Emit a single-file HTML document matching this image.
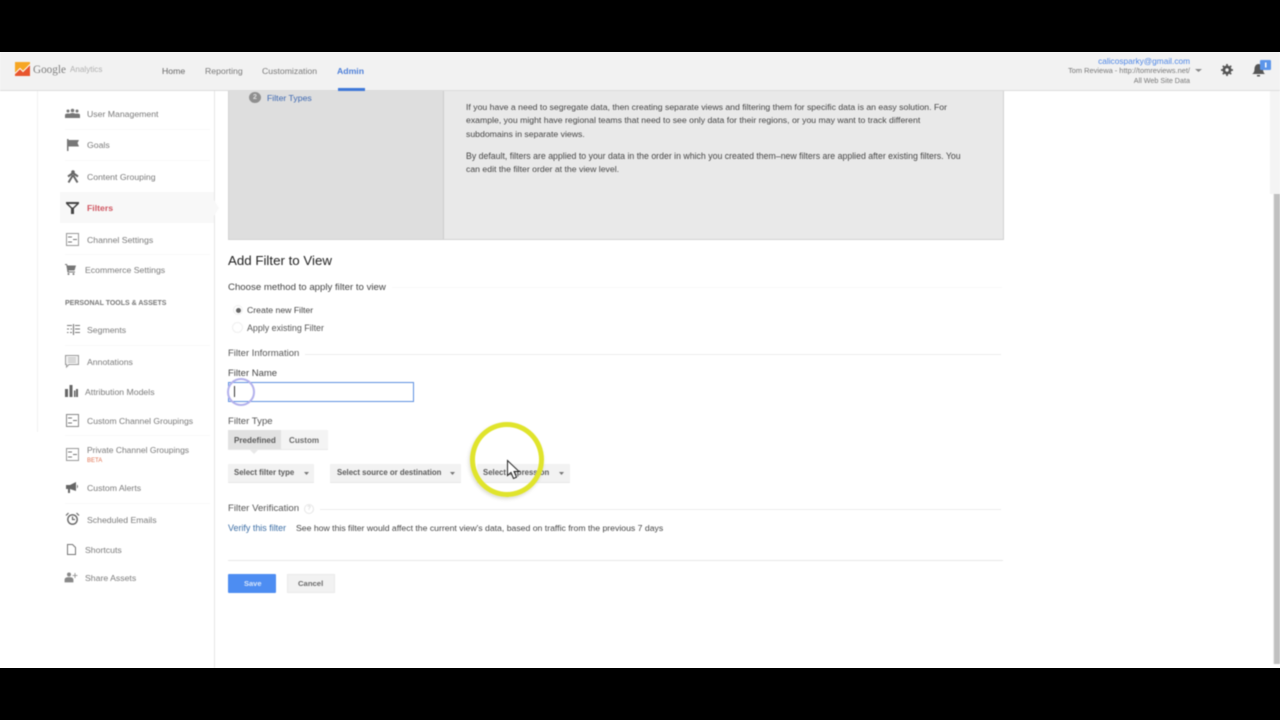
<!DOCTYPE html>
<html lang="en"><head><meta charset="utf-8"><title>Google Analytics - Add Filter to View</title>
<style>
html,body{margin:0;padding:0;width:1280px;height:720px;overflow:hidden;background:#000}
#app{position:absolute;left:0;top:52px;width:1280px;height:616px;background:#fff;overflow:hidden}
#layer{position:absolute;left:0;top:-52px;width:1280px;height:720px;filter:blur(.45px)}
.t{position:absolute;white-space:nowrap;font-family:"Liberation Sans",sans-serif;font-size:8.7px;line-height:12px;color:#5f5f5f;transform:translateY(-6px)}
.b{position:absolute}
.n{color:#7a7a7a;font-size:8.7px}
.d{color:#444;font-size:8.7px}
.btn{position:absolute;background:#f2f2f2;border-bottom:1px solid #e8e8e8;box-sizing:border-box}
.line{position:absolute;height:1px;background:#ececec}
.sl{position:absolute;height:1px;left:65px;width:145px;background:#f9f9f9}
.sel{font-size:7.800px;color:#5a5a5a;font-weight:bold}
svg{position:absolute;overflow:visible}
</style></head><body>
<div id="app"><div id="layer">

<!-- top bar -->
<div class="b" style="left:0;top:52px;width:1280px;height:38px;background:#f2f2f2;border-bottom:1px solid #dcdcdc"></div>
<svg style="left:15px;top:62px" width="15" height="14" viewBox="0 0 15 14"><rect width="15" height="14" fill="#f6a623"/><path d="M0 11.500L5 6.500l3 3L15 2.500V14H0z" fill="#e8552d"/><path d="M0 11.500L5 6.500l3 3L15 2.500" fill="none" stroke="#fff" stroke-width="1"/></svg>
<div class="t" style="left:33px;top:70px;font-family:'Liberation Serif',serif;font-size:11.200px;color:#7d7d7d">Google</div>
<div class="t" style="left:70px;top:70px;font-size:8.100px;color:#b0b0b0">Analytics</div>
<div class="t" style="left:162px;top:71px;color:#666">Home</div>
<div class="t" style="left:205px;top:71px;color:#7a7a7a">Reporting</div>
<div class="t" style="left:262px;top:71px;color:#7a7a7a">Customization</div>
<div class="t" style="left:337px;top:71px;color:#4d7fd8;font-weight:bold">Admin</div>
<div class="b" style="left:338px;top:88px;width:27px;height:3px;background:#3f78d8"></div>

<div class="t" style="right:90px;top:60.800px;font-size:8.300px;color:#4d86e6">calicosparky@gmail.com</div>
<div class="t" style="right:90px;top:71px;font-size:7.450px;color:#777">Tom Reviewa - http://tomreviews.net/</div>
<div class="t" style="right:90px;top:80.500px;font-size:7.200px;color:#777">All Web Site Data</div>
<svg style="left:1195px;top:69px" width="7" height="3"><path d="M0 0h7L3.500 3z" fill="#888"/></svg>
<svg style="left:1221px;top:64px" width="12" height="12" viewBox="0 0 12 12"><circle cx="6" cy="6" r="3.300" fill="none" stroke="#555" stroke-width="2.400"/><path d="M6 0v12M0 6h12M1.800 1.800l8.400 8.400M10.200 1.800l-8.400 8.400" stroke="#555" stroke-width="1.700"/><circle cx="6" cy="6" r="1.700" fill="#f2f2f2"/></svg>
<svg style="left:1252px;top:60px" width="19" height="17" viewBox="0 0 19 17"><path d="M0 14c2-1 2.500-3 2.500-5 0-3 1.800-5 4-5S11 6 11 9c0 2 .5 4 2 5z" fill="#555"/><rect x="5" y="15" width="3" height="1.500" fill="#555"/><rect x="8" y="0" width="11" height="10" rx="1" fill="#5b95ea"/><rect x="13" y="2.500" width="1.500" height="5" fill="#fff"/></svg>

<!-- sidebar structure -->
<div class="b" style="left:37px;top:91px;width:1px;height:341px;background:#f2f2f2"></div>
<div class="b" style="left:214px;top:91px;width:1px;height:577px;background:#e6e6e6"></div>
<div class="b" style="left:60px;top:192px;width:154px;height:31px;background:#f8f8f8"></div>
<svg style="left:214px;top:200px" width="6" height="16"><path d="M0 0l5 8-5 8z" fill="#f8f8f8"/></svg>
<div class="sl" style="top:129px"></div>
<div class="sl" style="top:160px"></div>
<div class="sl" style="top:254px"></div>
<div class="sl" style="top:345px"></div>
<div class="sl" style="top:435px"></div>
<div class="sl" style="top:503px"></div>

<!-- sidebar icons -->
<svg style="left:65px;top:108px" width="15" height="12" viewBox="0 0 15 12"><g fill="#777"><circle cx="3" cy="3" r="1.500"/><circle cx="7.500" cy="2.500" r="1.800"/><circle cx="12" cy="3" r="1.500"/><path d="M0 10V7q0-1.500 3-1.500T6 7v3zM4.500 10V6.500q0-1.500 3-1.500t3 1.500V10zM9 10V7q0-1.500 3-1.500T15 7v3z"/></g></svg>
<svg style="left:67px;top:139px" width="12" height="12" viewBox="0 0 12 12"><path d="M0 0h1.500v12H0zM1.500 1H12L10.500 4 12 7.500H1.500z" fill="#777"/></svg>
<svg style="left:67px;top:170px" width="12" height="13" viewBox="0 0 12 13"><circle cx="6" cy="2" r="1.800" fill="#666"/><path d="M6 3l-5 3.500M6 3l5 3.500M6 5L1.500 12.500M6 5l4.500 7.500" stroke="#666" stroke-width="2" fill="none"/></svg>
<svg style="left:66px;top:202px" width="13" height="12" viewBox="0 0 13 12"><path d="M0 0h13v1.800L8 6.500V12H5V6.500L0 1.800zM2.500 2l3.500 3.500h1L10.500 2z" fill="#444" fill-rule="evenodd"/></svg>
<svg style="left:66px;top:233px" width="13" height="13" viewBox="0 0 13 13"><rect x=".5" y=".5" width="12" height="12" fill="none" stroke="#999"/><path d="M2 4h4M2 9h4M7 6.500h4" stroke="#777" stroke-width="1.100"/></svg>
<svg style="left:65px;top:264px" width="11" height="11" viewBox="0 0 11 11"><path d="M0 0h2l.5 1.500H11L9.500 6.500H3.500L3.800 7.500H10V8.500H2.500L1.300 1H0z" fill="#777"/><circle cx="3.500" cy="10" r="1" fill="#777"/><circle cx="8.500" cy="10" r="1" fill="#777"/></svg>
<svg style="left:67px;top:324px" width="13" height="11" viewBox="0 0 13 11"><path d="M6.500 0v11M0 1.500h5M0 5h2M3.500 5H5M0 8.500h1.500M3 8.500h2M8 1.500h5M8 5h5M8 8.500h5" stroke="#777" stroke-width="1.100"/></svg>
<svg style="left:65px;top:355px" width="14" height="13" viewBox="0 0 14 13"><path d="M.5.500h13v9H4L1.500 12V9.500H.5z" fill="#f4f4f4" stroke="#999"/><path d="M3 3h8M3 5h8M3 7h8" stroke="#bbb"/></svg>
<svg style="left:65px;top:385px" width="13" height="12" viewBox="0 0 13 12"><path d="M0 4h3v8H0zM4.500 0h3v12h-3zM9 5.500h1.500v6.500H9zM11 4h2v8h-2z" fill="#666"/></svg>
<svg style="left:66px;top:414px" width="13" height="13" viewBox="0 0 13 13"><rect x=".5" y=".5" width="12" height="12" fill="none" stroke="#888"/><path d="M2 4h4M2 9h4M7 6.500h4" stroke="#777" stroke-width="1.100"/></svg>
<svg style="left:66px;top:448px" width="13" height="13" viewBox="0 0 13 13"><rect x=".5" y=".5" width="12" height="12" fill="none" stroke="#999"/><path d="M2 4h4M2 9h4M7 6.500h4" stroke="#777" stroke-width="1.100"/></svg>
<svg style="left:66px;top:482px" width="13" height="11" viewBox="0 0 13 11"><path d="M0 3h4l6-3v9L4 7v4H2V7H0zM11 2.500q2 2 0 4z" fill="#666"/></svg>
<svg style="left:66px;top:513px" width="13" height="13" viewBox="0 0 13 13"><circle cx="6.500" cy="6.500" r="4.700" fill="none" stroke="#666" stroke-width="1.400"/><path d="M6.500 3.500v3h2.500M0 2.500L2.500 0M13 2.500L10.500 0" stroke="#666" stroke-width="1.200" fill="none"/></svg>
<svg style="left:67px;top:544px" width="9" height="11" viewBox="0 0 9 11"><path d="M1 .500h4.500L8.500 3.500v7H.5V.5z" fill="none" stroke="#777"/></svg>
<svg style="left:65px;top:572px" width="13" height="10" viewBox="0 0 13 10"><circle cx="4" cy="2.500" r="2" fill="#888"/><path d="M0 10V7.500Q0 5.500 4 5.500T8 7.500V10zM10 1v5M7.500 3.500h5" fill="#888" stroke="#888" stroke-width=".8"/></svg>

<!-- sidebar labels -->
<div class="t n" style="left:87px;top:114px">User Management</div>
<div class="t n" style="left:87px;top:145px">Goals</div>
<div class="t n" style="left:87px;top:177px">Content Grouping</div>
<div class="t" style="left:87px;top:208px;color:#cf5560;font-weight:bold">Filters</div>
<div class="t n" style="left:87px;top:240px">Channel Settings</div>
<div class="t n" style="left:85px;top:270px">Ecommerce Settings</div>
<div class="t" style="left:65px;top:304px;font-size:7px;font-weight:bold;color:#777">PERSONAL TOOLS &amp; ASSETS</div>
<div class="t n" style="left:87px;top:330px">Segments</div>
<div class="t n" style="left:87px;top:362px">Annotations</div>
<div class="t n" style="left:85px;top:392px">Attribution Models</div>
<div class="t n" style="left:87px;top:421px;font-size:8.600px">Custom Channel Groupings</div>
<div class="t n" style="left:87px;top:450px;font-size:8.500px">Private Channel Groupings</div>
<div class="t" style="left:87px;top:461px;font-size:6px;color:#e0714f">BETA</div>
<div class="t n" style="left:87px;top:488px">Custom Alerts</div>
<div class="t n" style="left:87px;top:520px">Scheduled Emails</div>
<div class="t n" style="left:85px;top:550px">Shortcuts</div>
<div class="t n" style="left:85px;top:578px">Share Assets</div>

<!-- info panel -->
<div class="b" style="left:228px;top:91px;width:215px;height:148px;background:#dedede"></div>
<div class="b" style="left:443px;top:91px;width:560px;height:148px;background:#e9e9e9;border-left:1px solid #ccc;box-sizing:border-box"></div>
<div class="b" style="left:228px;top:91px;width:776px;height:149px;box-sizing:border-box;border:1px solid #d2d2d2;border-top:0"></div>
<div class="b" style="left:249px;top:92px;width:12px;height:11px;border-radius:50%;background:#8f8f8f;color:#ddd;font:bold 7px/11px 'Liberation Sans',sans-serif;text-align:center">2</div>
<div class="t" style="left:267px;top:98px;color:#3c67b1">Filter Types</div>
<div class="t d" style="left:466px;top:106.500px">If you have a need to segregate data, then creating separate views and filtering them for specific data is an easy solution. For</div>
<div class="t d" style="left:466px;top:120px">example, you might have regional teams that need to see only data for their regions, or you may want to track different</div>
<div class="t d" style="left:466px;top:133.500px">subdomains in separate views.</div>
<div class="t d" style="left:466px;top:156px;font-size:8.750px">By default, filters are applied to your data in the order in which you created them–new filters are applied after existing filters. You</div>
<div class="t d" style="left:466px;top:169px">can edit the filter order at the view level.</div>

<!-- form -->
<div class="t" style="left:228px;top:261px;font-size:13.300px;color:#222;line-height:16px;transform:translateY(-8px)">Add Filter to View</div>
<div class="t" style="left:228px;top:288px;font-size:9.650px;color:#444">Choose method to apply filter to view</div>
<div class="line" style="left:392px;top:287px;width:610px;background:#f8f8f8"></div>
<div class="b" style="left:233px;top:305px;width:8px;height:8px;border:1px solid #eee;border-radius:50%;background:#fff"></div>
<div class="b" style="left:235.500px;top:307.500px;width:5px;height:5px;border-radius:50%;background:#666"></div>
<div class="b" style="left:232px;top:322px;width:9px;height:9px;border:1px solid #efefef;border-radius:50%;background:#fff"></div>
<div class="t" style="left:247px;top:310px;color:#444">Create new Filter</div>
<div class="t" style="left:247px;top:328px;color:#555;font-size:8.900px">Apply existing Filter</div>

<div class="t" style="left:228px;top:354px;font-size:9.500px;color:#555">Filter Information</div>
<div class="line" style="left:305px;top:354px;width:696px"></div>
<div class="t" style="left:228px;top:374px;color:#444;font-size:9.500px">Filter Name</div>
<div class="b" style="left:228px;top:382px;width:186px;height:20px;box-sizing:border-box;border:1px solid #5c8fe0;background:#fff"></div>
<div class="b" style="left:234px;top:386px;width:1px;height:11px;background:#333"></div>
<div class="b" style="left:227px;top:378px;width:24px;height:24px;border:2px solid #b3b1ec;border-radius:50%"></div>

<div class="t" style="left:228px;top:422px;color:#555;font-size:9.600px">Filter Type</div>
<div class="btn" style="left:228px;top:430px;width:53px;height:20px;background:#e2e2e2"></div>
<div class="btn" style="left:281px;top:430px;width:47px;height:20px;background:#f4f4f4"></div>
<svg style="left:250px;top:450px" width="8" height="4"><path d="M0 0h8L4 4z" fill="#e8e8e8"/></svg>
<div class="t" style="left:234px;top:440.500px;font-size:8.100px;color:#5a5a5a;font-weight:bold">Predefined</div>
<div class="t" style="left:289px;top:440.500px;font-size:8.100px;color:#6a6a6a;font-weight:bold">Custom</div>

<div class="btn" style="left:228px;top:464px;width:86px;height:19px"></div>
<div class="btn" style="left:330px;top:464px;width:131px;height:19px"></div>
<div class="btn" style="left:477px;top:464px;width:93px;height:19px"></div>
<div class="t sel" style="left:234px;top:472.500px">Select filter type</div>
<div class="t sel" style="left:337px;top:472.500px">Select source or destination</div>
<div class="t sel" style="left:483px;top:472.500px">Select expression</div>
<svg style="left:304px;top:472px" width="5" height="3"><path d="M0 0h5L2.500 3z" fill="#777"/></svg>
<svg style="left:450px;top:472px" width="5" height="3"><path d="M0 0h5L2.500 3z" fill="#777"/></svg>
<svg style="left:559px;top:472px" width="5" height="3"><path d="M0 0h5L2.500 3z" fill="#777"/></svg>

<div class="t" style="left:228px;top:509px;font-size:9.650px;color:#555">Filter Verification</div>
<div class="b" style="left:304px;top:504px;width:8px;height:8px;border:1px solid #e6e6e6;border-radius:50%;color:#ccc;font:6px/8px 'Liberation Sans',sans-serif;text-align:center">?</div>
<div class="line" style="left:320px;top:509px;width:681px"></div>
<div class="t" style="left:228px;top:528px;color:#3c6ea5;font-size:8.950px">Verify this filter</div>
<div class="t" style="left:296px;top:528px;color:#444;font-size:8.680px">See how this filter would affect the current view's data, based on traffic from the previous 7 days</div>
<div class="line" style="left:228px;top:560px;width:775px;background:#e8e8e8"></div>
<div class="b" style="left:228px;top:574px;width:48px;height:19px;background:#4d8df2;border-radius:1px"></div>
<div class="t" style="left:244px;top:584px;font-size:7.500px;font-weight:bold;color:#d8e6fb">Save</div>
<div class="btn" style="left:287px;top:574px;width:48px;height:19px;border:1px solid #eaeaea"></div>
<div class="t" style="left:298px;top:584px;font-size:7.700px;font-weight:bold;color:#6a6a6a">Cancel</div>

<!-- cursor highlight -->
<div class="b" style="left:470px;top:422px;width:74px;height:75px;box-sizing:border-box;border:5px solid #e0e42c;border-radius:50%;box-shadow:-1px 2px 3px rgba(120,120,80,.25)"></div>
<svg style="left:507px;top:460px" width="13" height="20" viewBox="0 0 13 20"><path d="M.5.500v15l3.500-3 2.500 6 3-1.300-2.500-5.700h5z" fill="#fff" stroke="#222" stroke-width="1"/></svg>

<!-- scrollbar -->
<div class="b" style="left:1270px;top:91px;width:10px;height:103px;background:#f4f4f4"></div>
<div class="b" style="left:1273px;top:194px;width:1px;height:470px;background:#eee"></div>
<div class="b" style="left:1274px;top:194px;width:6px;height:470px;background:#c0c0c0"></div>
</div></div>
</body></html>
